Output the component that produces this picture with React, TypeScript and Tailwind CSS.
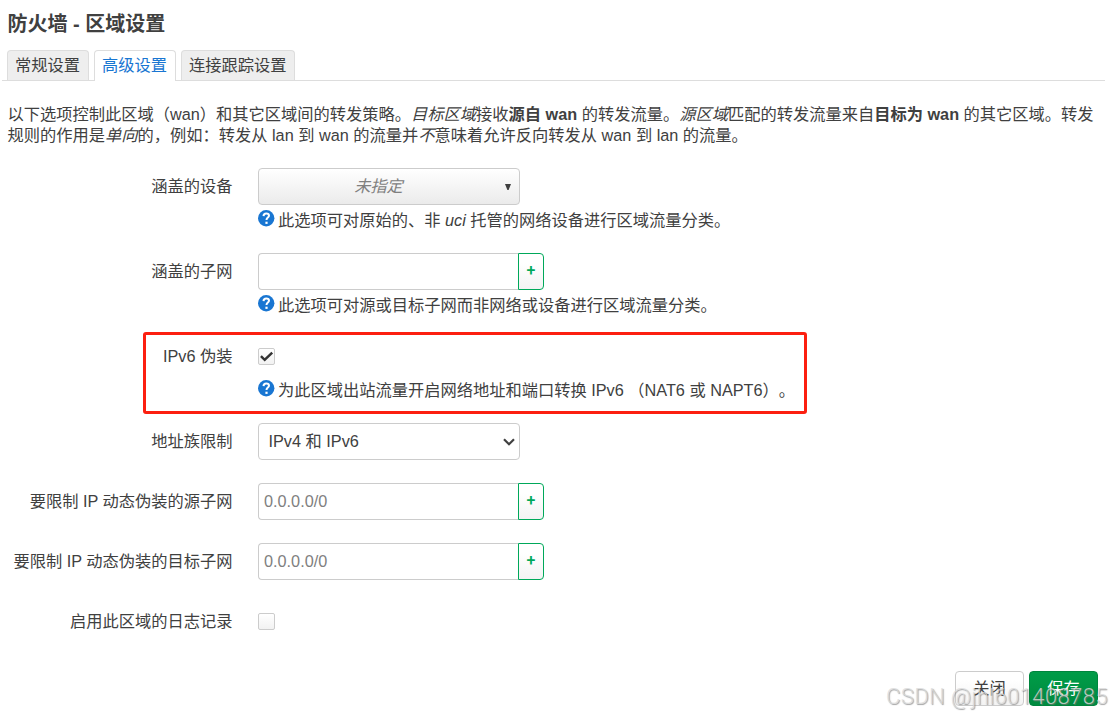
import type { ReactNode } from 'react';

const tabs = ['常规设置', '高级设置', '连接跟踪设置'];

function HelpIcon() {
  return (
    <svg width="17" height="17" viewBox="0 0 17 17" className="mt-[1px] mr-[3px] shrink-0">
      <circle cx="8.2" cy="8.2" r="8.2" fill="#1976d2" />
      <path d="M5.5 6.1C5.6 4.3 6.8 3.4 8.2 3.4c1.7 0 2.8.9 2.8 2.3 0 1.9-2.5 2-2.5 4.3" fill="none" stroke="#fff" strokeWidth="2" />
      <rect x="7.4" y="11.7" width="2.2" height="2.2" fill="#fff" />
    </svg>
  );
}

function Row({ label, help, highlight, children }: { label: string; help?: ReactNode; highlight?: boolean; children: ReactNode }) {
  return (
    <div className={help ? 'relative flex h-[85px]' : 'relative flex h-[60px]'}>
      {highlight && (
        <div className="pointer-events-none absolute -top-[6px] left-[143px] h-[82px] w-[664px] rounded-[3px] border-3 border-[#fc1f10]" />
      )}
      <label className="mr-[25.5px] w-[232.5px] shrink-0 text-right leading-[37px]">{label}</label>
      <div>
        <div className="flex h-[37px] items-center">{children}</div>
        {help && (
          <div className="mt-1 flex leading-[22px]">
            <HelpIcon />
            <span>{help}</span>
          </div>
        )}
      </div>
    </div>
  );
}

function DynamicList({ placeholder }: { placeholder?: string }) {
  return (
    <>
      <input
        className="h-[37px] w-[260px] rounded-l-[4px] border border-r-0 border-[#ccc] px-[5px] placeholder:text-[#808080]"
        placeholder={placeholder}
      />
      <button className="h-[37px] w-[26px] rounded-r-[4px] border border-[#00a85a] bg-linear-to-b from-white from-25% to-[#f3f3f3] pb-[2px] font-[Roboto] text-[16px] leading-none font-medium text-[#00a85a]">
        +
      </button>
    </>
  );
}

function Checkbox({ checked }: { checked?: boolean }) {
  return (
    <span className="flex size-[17px] items-center justify-center rounded-[2px] border border-[#ccc] bg-linear-to-b from-white to-[#f2f2f2]">
      {checked && (
        <svg width="15" height="15" viewBox="0 0 15 15">
          <path d="M1.9 7.2l3.8 3.6 7.5-7.2" fill="none" stroke="#333" strokeWidth="2.5" />
        </svg>
      )}
    </span>
  );
}

export default function App() {
  return (
    <div className="relative h-[717px] w-[1112px] overflow-hidden bg-white font-['Liberation_Sans','Noto_Sans_CJK_SC',sans-serif] text-[16.25px] text-[#404040] [text-spacing-trim:space-all]">
      <h4 className="pt-[7px] pl-[7.5px] text-[20px] leading-[34px] font-bold">防火墙 - 区域设置</h4>

      <ul className="mt-[9px] mr-[7px] ml-[2px] flex h-[31px] gap-[5px] border-b border-[#ddd] pl-[5px]">
        {tabs.map((tab, i) => (
          <li
            key={tab}
            className={
              i === 1
                ? 'h-[31px] rounded-t-[4px] border border-b-0 border-[#ddd] bg-white pr-[8px] pl-[7px] leading-[28px] text-[#1976d2]'
                : 'h-[30px] rounded-t-[4px] border border-b-0 border-[#ddd] bg-[#eee] pr-[8px] pl-[7px] leading-[28px] last:pr-[7px]'
            }
          >
            {tab}
          </li>
        ))}
      </ul>

      <p className="mt-[23px] pl-[7.5px] leading-[21px] whitespace-nowrap">
        以下选项控制此区域（wan）和其它区域间的转发策略。<em>目标区域</em>接收<strong>源自 wan</strong> 的转发流量。<em>源区域</em>匹配的转发流量来自<strong>目标为 wan</strong> 的其它区域。转发
        <br />
        规则的作用是<em>单向</em>的，例如：转发从 lan 到 wan 的流量并<em>不</em>意味着允许反向转发从 wan 到 lan 的流量。
      </p>

      <div className="mt-[22px]">
        <Row label="涵盖的设备" help={<>此选项可对原始的、非 <em>uci</em> 托管的网络设备进行区域流量分类。</>}>
          <div className="flex h-[37px] w-[262px] items-center rounded-[4px] border border-[#ccc] bg-linear-to-b from-white to-[#ebebeb]">
            <em className="flex-1 pr-[7px] text-center text-[#808080]">未指定</em>
            <svg width="6" height="6" viewBox="0 0 6 6" className="mr-[8px]">
              <path d="M0 0h6L3.6 6H2.4z" fill="#404040" />
            </svg>
          </div>
        </Row>
        <Row label="涵盖的子网" help="此选项可对源或目标子网而非网络或设备进行区域流量分类。">
          <DynamicList />
        </Row>
        <Row label="IPv6 伪装" highlight help="为此区域出站流量开启网络地址和端口转换 IPv6 （NAT6 或 NAPT6）。">
          <Checkbox checked />
        </Row>
        <Row label="地址族限制">
          <div className="flex h-[37px] w-[262px] items-center justify-between rounded-[4px] border border-[#ccc] bg-white pr-[4px] pl-[9.5px]">
            <span>IPv4 和 IPv6</span>
            <svg width="12" height="8" viewBox="0 0 12 8">
              <path d="M1 1.2l5 5 5-5" fill="none" stroke="#404040" strokeWidth="2.2" />
            </svg>
          </div>
        </Row>
        <Row label="要限制 IP 动态伪装的源子网">
          <DynamicList placeholder="0.0.0.0/0" />
        </Row>
        <Row label="要限制 IP 动态伪装的目标子网">
          <DynamicList placeholder="0.0.0.0/0" />
        </Row>
        <Row label="启用此区域的日志记录">
          <Checkbox />
        </Row>
      </div>

      <div className="mt-2 mr-[14px] flex justify-end gap-[5px]">
        <button className="h-[35px] w-[69px] rounded-[4px] border border-[#ccc] bg-linear-to-b from-white from-25% to-[#f3f3f3]">关闭</button>
        <button className="h-[35px] w-[69px] rounded-[4px] border border-[#00853d] bg-linear-to-b from-[#009c48] to-[#008a3f] text-white">保存</button>
      </div>

      <div className="absolute top-[684px] left-[886px] font-[Roboto] text-[22px] leading-[26px] font-light tracking-[0.4px] whitespace-nowrap text-[#dcdcdc]/80 [text-shadow:1px_1px_1px_#777777b0]">
        CSDN @jhl601408785
      </div>
    </div>
  );
}
